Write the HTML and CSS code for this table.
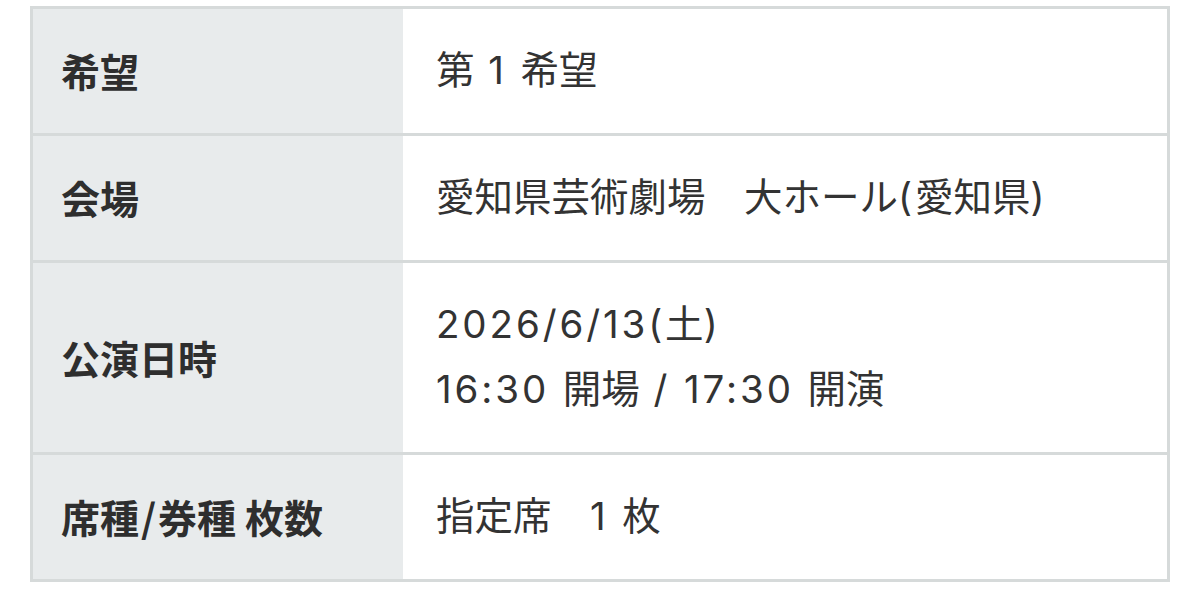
FILE: index.html
```html
<!DOCTYPE html>
<html lang="ja">
<head>
<meta charset="utf-8">
<title>申込内容</title>
<link rel="stylesheet" href="styles.css">
</head>
<body>
<table class="detail">
  <tbody>
    <tr>
      <th>希望</th>
      <td>第<span class="en"> 1 </span>希望</td>
    </tr>
    <tr>
      <th>会場</th>
      <td>愛知県芸術劇場　大ホール<span class="en">(</span>愛知県<span class="en">)</span></td>
    </tr>
    <tr>
      <th>公演日時</th>
      <td><span class="en">2026/6/13(</span>土<span class="en">)</span><br><span class="en">16:30 </span>開場<span class="en"> / 17:30 </span>開演</td>
    </tr>
    <tr>
      <th>席種<span class="en">/</span>券種 枚数</th>
      <td>指定席　<span class="en">1 </span>枚</td>
    </tr>
  </tbody>
</table>
</body>
</html>
```

FILE: styles.css
```css
html, body {
  margin: 0;
  padding: 0;
  background: #ffffff;
}

body {
  padding: 6px 0 0 30px;
  font-family: "Inter", "Noto Sans CJK JP", sans-serif;
  color: #333333;
}

.detail {
  width: 1140px;
  border-collapse: collapse;
  border: 3px solid #d6dada;
}

.detail th,
.detail td {
  border-top: 3px solid #d6dada;
  line-height: 65px;
  padding: 29px 0 30px;
  vertical-align: middle;
  text-align: left;
}

.detail th {
  width: 342px;
  padding-left: 28px;
  background: #e8ebec;
  font-family: "Noto Sans CJK JP", sans-serif;
  font-size: 39px;
  font-weight: 700;
  color: #2e2e2e;
}

.detail th .en {
  padding: 0 2px;
}

.detail td {
  padding-left: 33px;
  font-size: 38.5px;
  font-weight: 400;
  background: #ffffff;
}

.detail td .en {
  letter-spacing: 0.075em;
}
```
